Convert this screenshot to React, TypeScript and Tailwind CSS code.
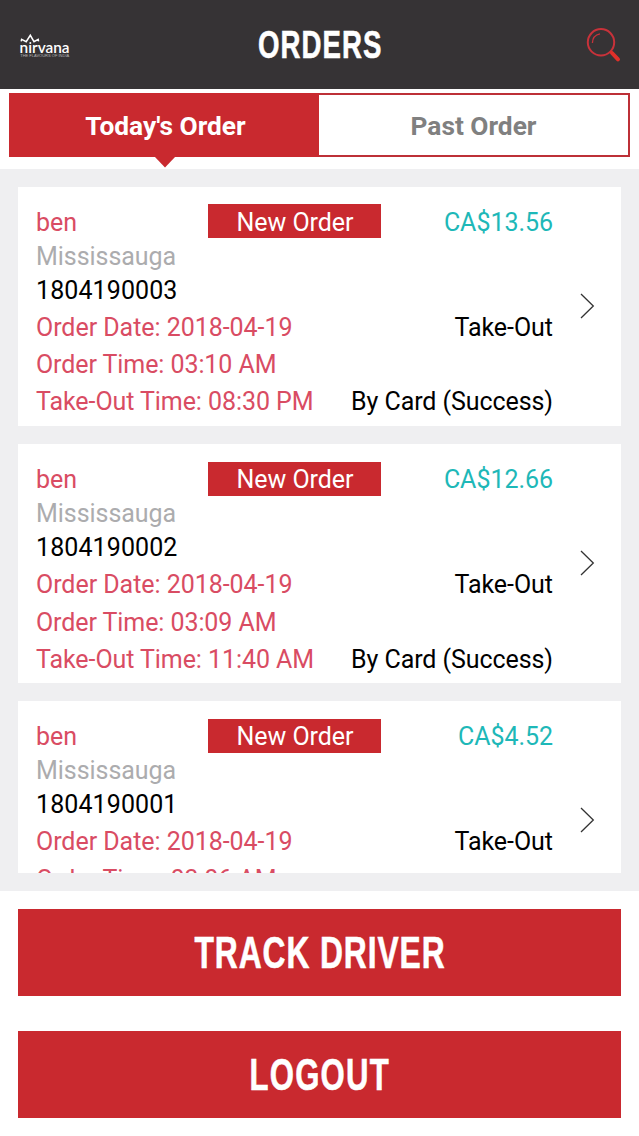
import type { ReactNode } from "react";

type Order = { id: string; price: string; time: string; takeOut: string };

const orders: Order[] = [
  { id: "1804190003", price: "CA$13.56", time: "03:10 AM", takeOut: "08:30 PM" },
  { id: "1804190002", price: "CA$12.66", time: "03:09 AM", takeOut: "11:40 AM" },
  { id: "1804190001", price: "CA$4.52", time: "03:06 AM", takeOut: "11:30 AM" },
];

function Logo() {
  return (
    <svg width="52" height="26" viewBox="0 0 52 26" className="shrink-0 overflow-visible">
      <path
        d="M2.2 9.4L2.6 7.4L7.2 9.7L11.3 3.3L15 9.7L19.2 7.4L19.6 9.4"
        fill="none"
        stroke="#fff"
        strokeWidth="1.5"
      />
      <text x="0.6" y="21.3" textLength="50" lengthAdjust="spacingAndGlyphs" fill="#fff" fontSize="16" className="font-['Lato'] font-semibold">
        nırvana
      </text>
      <circle cx="11.3" cy="10.9" r="1" fill="#fff" />
      <text x="1.2" y="25.2" textLength="49" lengthAdjust="spacingAndGlyphs" fill="#b5b5b5" fontSize="3" className="font-['Liberation_Sans']">
        THE FLAVOURS OF INDIA
      </text>
    </svg>
  );
}

function SearchIcon() {
  return (
    <svg width="36" height="36" viewBox="0 0 36 36" fill="none" className="shrink-0">
      <circle cx="15" cy="15.3" r="13.2" stroke="#c8323a" strokeWidth="2" />
      <path d="M6.4 16C6.5 11.2 9 7.8 14 6.8" stroke="#c8323a" strokeWidth="1.3" />
      <path d="M24.3 24.3L27 27" stroke="#dc2f2c" strokeWidth="2.2" />
      <path d="M26 26L32 32.4" stroke="#e0302a" strokeWidth="4" strokeLinecap="round" />
    </svg>
  );
}

function OrderCard({ order }: { order: Order }) {
  return (
    <article className="flex h-[239.3px] shrink-0 items-start bg-white pl-[18px] pr-[26px] pt-[17.4px] text-[25px] leading-none tracking-[-0.04px]">
      <div className="grid flex-1 grid-rows-[34px_34px_34px_40px_35px_39px] items-center whitespace-nowrap">
        <div className="flex h-[34px] items-center justify-between">
          <span className="w-[172px] pt-[2px] text-[#d94c63]">ben</span>
          <span className="flex h-[34px] w-[173px] items-center justify-center bg-[#c9292f] pl-px pt-[2px] text-white">New Order</span>
          <span className="w-[172px] pt-[2px] text-right text-[#1eb8b8]">{order.price}</span>
        </div>
        <div className="pt-[2px] text-[#acacae]">Mississauga</div>
        <div className="pt-[2px] tracking-[0.1px] text-black">{order.id}</div>
        <div className="flex justify-between pt-[2px]">
          <span className="text-[#d94c63]">Order Date: 2018-04-19</span>
          <span className="text-black">Take-Out</span>
        </div>
        <div className="pt-[2px] tracking-[-0.08px] text-[#d94c63]">Order Time: {order.time}</div>
        <div className="flex justify-between pt-[2px] tracking-[-0.07px]">
          <span className="text-[#d94c63]">Take-Out Time: {order.takeOut}</span>
          <span className="text-black">By Card (Success)</span>
        </div>
      </div>
      <svg width="16" height="28" viewBox="0 0 16 28" className="ml-[26px] mt-[87.5px] shrink-0">
        <path d="M2 2L14.3 14L2 26" fill="none" stroke="#333" strokeWidth="1.3" />
      </svg>
    </article>
  );
}

function ActionButton({ children }: { children: ReactNode }) {
  return (
    <button className="flex h-[87px] w-full items-center justify-center bg-[#c9292f] text-white">{children}</button>
  );
}

export default function App() {
  return (
    <div className="flex h-[1136px] w-[639px] flex-col overflow-hidden bg-white font-['Roboto',sans-serif]">
      <header className="grid h-[89px] shrink-0 grid-cols-[1fr_140px_1fr] items-center bg-[#363335] pl-[19px] pr-[17px]">
        <Logo />
        <svg width="140" height="44" viewBox="0 0 140 44" className="overflow-visible">
          <text x="7" y="35" textLength="124.5" lengthAdjust="spacingAndGlyphs" fill="#fff" stroke="#fff" strokeWidth="0.6" letterSpacing="1.5" fontSize="39.5" className="font-['Liberation_Sans_Narrow','Liberation_Sans',sans-serif] font-bold">
            ORDERS
          </text>
        </svg>
        <div className="flex justify-end">
          <SearchIcon />
        </div>
      </header>
      <nav className="flex h-[80px] shrink-0 px-[9px] pt-[4px] text-[26.3px] leading-none">
        <div className="relative flex h-[64px] w-[310px] shrink-0 items-center justify-center bg-[#c9292f] pl-[3px] pt-[2px] font-bold text-white">
          Today's Order
          <svg width="22" height="12" viewBox="0 0 22 12" className="absolute left-[145px] top-[63px]">
            <path d="M0 0H22L11 11.5Z" fill="#c9292f" />
          </svg>
        </div>
        <div className="flex h-[64px] w-[311px] shrink-0 items-center justify-center border-2 border-l-0 border-[#bd3037] pt-[2px] font-bold text-[#808080]">
          Past Order
        </div>
      </nav>
      <main className="h-[722px] shrink-0 bg-[#efeff1] px-[18px] py-[18px]">
        <div className="flex h-[686px] flex-col gap-[17.9px] overflow-hidden">
          {orders.map((order) => (
            <OrderCard key={order.id} order={order} />
          ))}
        </div>
      </main>
      <footer className="flex flex-col gap-[35px] px-[18px] pt-[18px]">
        <ActionButton>
          <svg width="260" height="44" viewBox="0 0 260 44" className="overflow-visible">
            <text x="4.5" y="36.5" textLength="251" lengthAdjust="spacingAndGlyphs" fill="#fff" stroke="#fff" strokeWidth="0.6" letterSpacing="1.3" fontSize="45" className="font-['Liberation_Sans_Narrow','Liberation_Sans',sans-serif] font-bold">
              TRACK DRIVER
            </text>
          </svg>
        </ActionButton>
        <ActionButton>
          <svg width="150" height="44" viewBox="0 0 150 44" className="overflow-visible">
            <text x="4.5" y="36.8" textLength="140.5" lengthAdjust="spacingAndGlyphs" fill="#fff" stroke="#fff" strokeWidth="0.6" letterSpacing="1.8" fontSize="45" className="font-['Liberation_Sans_Narrow','Liberation_Sans',sans-serif] font-bold">
              LOGOUT
            </text>
          </svg>
        </ActionButton>
      </footer>
    </div>
  );
}
